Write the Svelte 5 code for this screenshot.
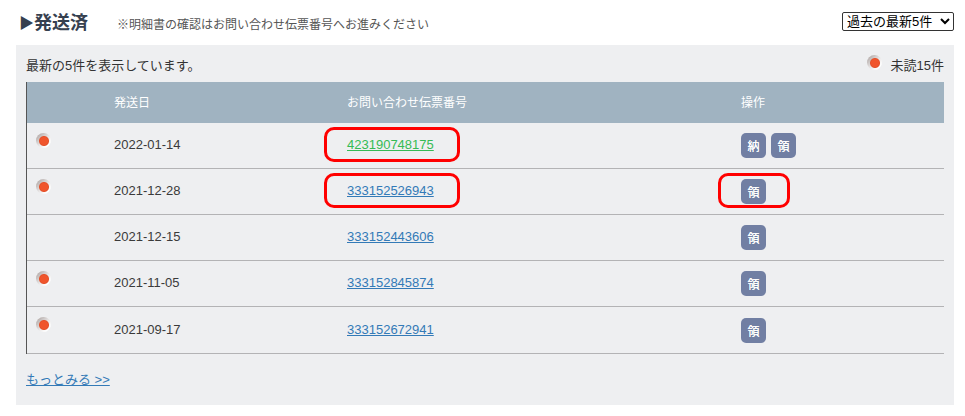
<script>
  const rows = [
    { unread: true, date: "2022-01-14", slip: "423190748175", visited: true, docs: ["納", "領"], markSlip: true },
    { unread: true, date: "2021-12-28", slip: "333152526943", docs: ["領"], markSlip: true, markDoc: true },
    { unread: false, date: "2021-12-15", slip: "333152443606", docs: ["領"] },
    { unread: true, date: "2021-11-05", slip: "333152845874", docs: ["領"] },
    { unread: true, date: "2021-09-17", slip: "333152672941", docs: ["領"] }
  ];
</script>

{#snippet dot()}
  <span class="dot"></span>
{/snippet}

<div class="page">
  <header class="head">
    <h2><span class="arrow">▶</span>発送済</h2>
    <p class="note">※明細書の確認はお問い合わせ伝票番号へお進みください</p>
    <select class="range">
      <option>過去の最新5件</option>
    </select>
  </header>

  <section class="panel">
    <div class="info">
      <span>最新の5件を表示しています。</span>
      <span class="unread">{@render dot()}未読15件</span>
    </div>

    <table>
      <thead>
        <tr>
          <th class="c-dot"></th>
          <th class="c-date">発送日</th>
          <th class="c-slip">お問い合わせ伝票番号</th>
          <th>操作</th>
        </tr>
      </thead>
      <tbody>
        {#each rows as row}
          <tr>
            <td class="c-dot">
              {#if row.unread}{@render dot()}{/if}
            </td>
            <td class="c-date">{row.date}</td>
            <td class="c-slip">
              <span class="mark-wrap">
                <a href="#slip" class:visited={row.visited}>{row.slip}</a>
                {#if row.markSlip}<span class="mark slip"></span>{/if}
              </span>
            </td>
            <td>
              <span class="mark-wrap docs">
                {#each row.docs as doc}
                  <button>{doc}</button>
                {/each}
                {#if row.markDoc}<span class="mark doc"></span>{/if}
              </span>
            </td>
          </tr>
        {/each}
      </tbody>
    </table>

    <a class="more" href="#more">もっとみる &gt;&gt;</a>
  </section>
</div>

<style>
  :global(body) {
    margin: 0;
    background: #fff;
  }

  .page {
    width: 965px;
    height: 416px;
    overflow: hidden;
    font-family: "Liberation Sans", "Noto Sans CJK JP", sans-serif;
    font-size: 13px;
    color: #333;
  }

  .head {
    display: flex;
    align-items: center;
    height: 45px;
    padding: 0 11px 0 19px;
    box-sizing: border-box;
  }

  h2 {
    margin: -4px 0 0;
    width: 98px;
    font-size: 18px;
    font-weight: 700;
    color: #36404f;
    white-space: nowrap;
  }

  .arrow {
    font-size: 15px;
    vertical-align: 1px;
  }

  .note {
    flex: 1;
    margin: 2px 0 0;
    font-size: 12px;
    color: #555;
  }

  .range {
    width: 112px;
    height: 19px;
    margin-top: -2px;
    padding: 0;
    background: #fff;
    border: 1px solid #333;
    border-radius: 2px;
    font: inherit;
    color: #000;
  }

  .panel {
    width: 938px;
    height: 360px;
    margin-left: 16px;
    padding: 0 10px;
    background: #eeeff1;
    box-sizing: border-box;
  }

  .info {
    display: flex;
    justify-content: space-between;
    align-items: center;
    height: 37px;
    padding-top: 1px;
    box-sizing: border-box;
  }

  .unread {
    display: flex;
    align-items: center;
    gap: 9px;
  }

  .unread .dot {
    margin-top: -3px;
  }

  .dot {
    display: block;
    width: 15px;
    height: 15px;
    border-radius: 50%;
    background:
      radial-gradient(circle at 8px 8px, #f0552c 0 3.5px, #e4512b 4.5px, transparent 5.5px),
      linear-gradient(135deg, #b3aaa8 10%, #ebe9e9 55%, #fff 80%);
  }

  table {
    width: 918px;
    border-collapse: separate;
    border-spacing: 0;
    border-left: 1px solid #555;
    table-layout: fixed;
  }

  th {
    height: 38px;
    padding: 0 0 3px;
    box-sizing: content-box;
    background: #a0b3c1;
    color: #fff;
    font-size: 12px;
    font-weight: 400;
    text-align: left;
  }

  td {
    padding: 0 0 2px;
    box-sizing: content-box;
    border-bottom: 1px solid #b3b3b5;
    color: #3a3a3a;
  }

  tr td {
    height: 43px;
  }

  tr:last-child td {
    height: 44px;
  }

  .c-dot {
    width: 87px;
    padding-left: 9px;
    box-sizing: border-box;
  }

  td.c-dot {
    vertical-align: top;
    padding-top: 10px;
  }

  .c-date {
    width: 233px;
  }

  .c-slip {
    width: 394px;
  }

  a {
    color: #337ab7;
    text-decoration: underline;
  }

  a.visited {
    color: #35bb55;
  }

  .mark-wrap {
    position: relative;
    display: inline-block;
  }

  .docs {
    display: inline-flex;
    gap: 5px;
    vertical-align: middle;
    margin-top: 2px;
  }

  button {
    width: 25px;
    height: 25px;
    padding: 0;
    background: #717fa3;
    border: none;
    border-radius: 5px;
    color: #fff;
    font: inherit;
    font-size: 12px;
    font-weight: 400;
    text-shadow: 0 0 0.5px #fff;
  }

  .mark {
    position: absolute;
    border: 3px solid #f00;
    border-radius: 10px;
    box-sizing: border-box;
    pointer-events: none;
  }

  .mark.slip {
    left: -23px;
    top: -10px;
    width: 136px;
    height: 35px;
  }

  .mark.doc {
    left: -23px;
    top: -6px;
    width: 72px;
    height: 35px;
  }

  .more {
    display: inline-block;
    margin-top: 15px;
  }
</style>
